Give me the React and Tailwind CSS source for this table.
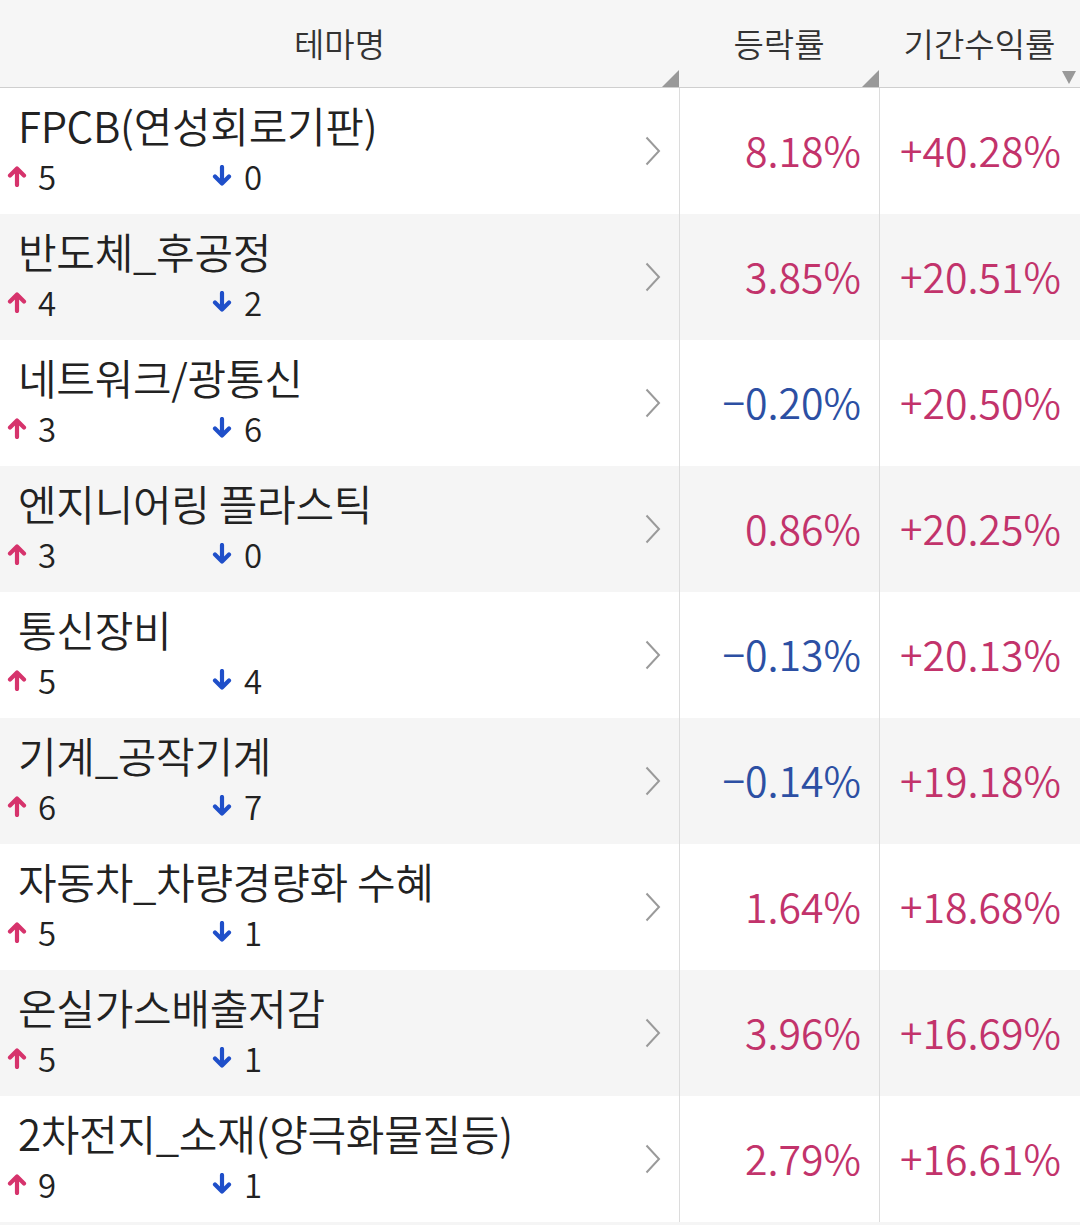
const rows = [
  { name: "FPCB(연성회로기판)", up: 5, down: 0, rate: "8.18%", period: "+40.28%" },
  { name: "반도체_후공정", up: 4, down: 2, rate: "3.85%", period: "+20.51%" },
  { name: "네트워크/광통신", up: 3, down: 6, rate: "−0.20%", period: "+20.50%" },
  { name: "엔지니어링 플라스틱", up: 3, down: 0, rate: "0.86%", period: "+20.25%" },
  { name: "통신장비", up: 5, down: 4, rate: "−0.13%", period: "+20.13%" },
  { name: "기계_공작기계", up: 6, down: 7, rate: "−0.14%", period: "+19.18%" },
  { name: "자동차_차량경량화 수혜", up: 5, down: 1, rate: "1.64%", period: "+18.68%" },
  { name: "온실가스배출저감", up: 5, down: 1, rate: "3.96%", period: "+16.69%" },
  { name: "2차전지_소재(양극화물질등)", up: 9, down: 1, rate: "2.79%", period: "+16.61%" },
];

const UpArrow = () => (
  <svg width="20" height="22" viewBox="0 0 20 22" fill="none" stroke="#d6336c" strokeWidth="4.2" strokeLinecap="round" strokeLinejoin="round">
    <path d="M10 20V4M3 10.5L10 3.5l7 7" />
  </svg>
);

const DownArrow = () => (
  <svg width="20" height="22" viewBox="0 0 20 22" fill="none" stroke="#1f4fc9" strokeWidth="4.2" strokeLinecap="round" strokeLinejoin="round">
    <path d="M10 2v16M3 11.5L10 18.5l7-7" />
  </svg>
);

// sort marker sitting in the header's lower-right corner
const Corner = () => (
  <svg className="absolute right-0 bottom-0" width="17" height="17" viewBox="0 0 17 17">
    <path d="M17 0V17H0Z" fill="#999" />
  </svg>
);

export default function App() {
  return (
    <div className="w-[1080px] bg-white text-[#222] font-[350]" style={{ fontFamily: '"Noto Sans CJK KR", "Noto Sans", sans-serif' }}>
      <div className="flex h-[88px] bg-[#f6f6f6] border-b border-[#cfcfcf] text-[33px] text-[#333]">
        <div className="relative w-[679px] flex items-center justify-center">
          테마명
          <Corner />
        </div>
        <div className="relative w-[200px] flex items-center justify-center">
          등락률
          <Corner />
        </div>
        <div className="relative flex-1 flex items-center justify-center">
          기간수익률
          <svg className="absolute right-[4px] bottom-[3px]" width="14" height="13" viewBox="0 0 14 13">
            <path d="M0 0H14L7 13Z" fill="#999" />
          </svg>
        </div>
      </div>

      {rows.map((r, i) => {
        const neg = r.rate.startsWith("−");
        return (
          <div key={r.name} className={`flex h-[126px] ${i % 2 ? "bg-[#f5f5f5]" : "bg-white"}`}>
            <div className="w-[679px] flex items-center pr-[18px]">
              <div className="flex-1 flex flex-col -mt-[5px]">
                <div className="pl-[18px] text-[42px] leading-[52px] tracking-[-0.3px]">{r.name}</div>
                <div className="flex items-center pl-[7px] text-[33px] leading-[44px] mt-[3px]">
                  <div className="w-[205px] flex items-center gap-[11px]">
                    <UpArrow />
                    <span>{r.up}</span>
                  </div>
                  <div className="flex items-center gap-[12px]">
                    <DownArrow />
                    <span>{r.down}</span>
                  </div>
                </div>
              </div>
              <svg width="16" height="30" viewBox="0 0 16 30" fill="none" stroke="#9a9a9a" strokeWidth="2">
                <path d="M1.5 1.5L14 15L1.5 28.5" />
              </svg>
            </div>
            <div className={`w-[200px] border-l border-[#dcdcdc] flex items-center justify-end pr-[18px] pb-[3px] text-[41px] ${neg ? "text-[#2c4fa3]" : "text-[#c2336b]"}`}>
              {r.rate}
            </div>
            <div className="flex-1 border-l border-[#dcdcdc] flex items-center justify-end pr-[19px] pb-[3px] text-[41px] text-[#c2336b]">
              {r.period}
            </div>
          </div>
        );
      })}
      <div className="h-[3px] bg-[#f5f5f5]" />
    </div>
  );
}
